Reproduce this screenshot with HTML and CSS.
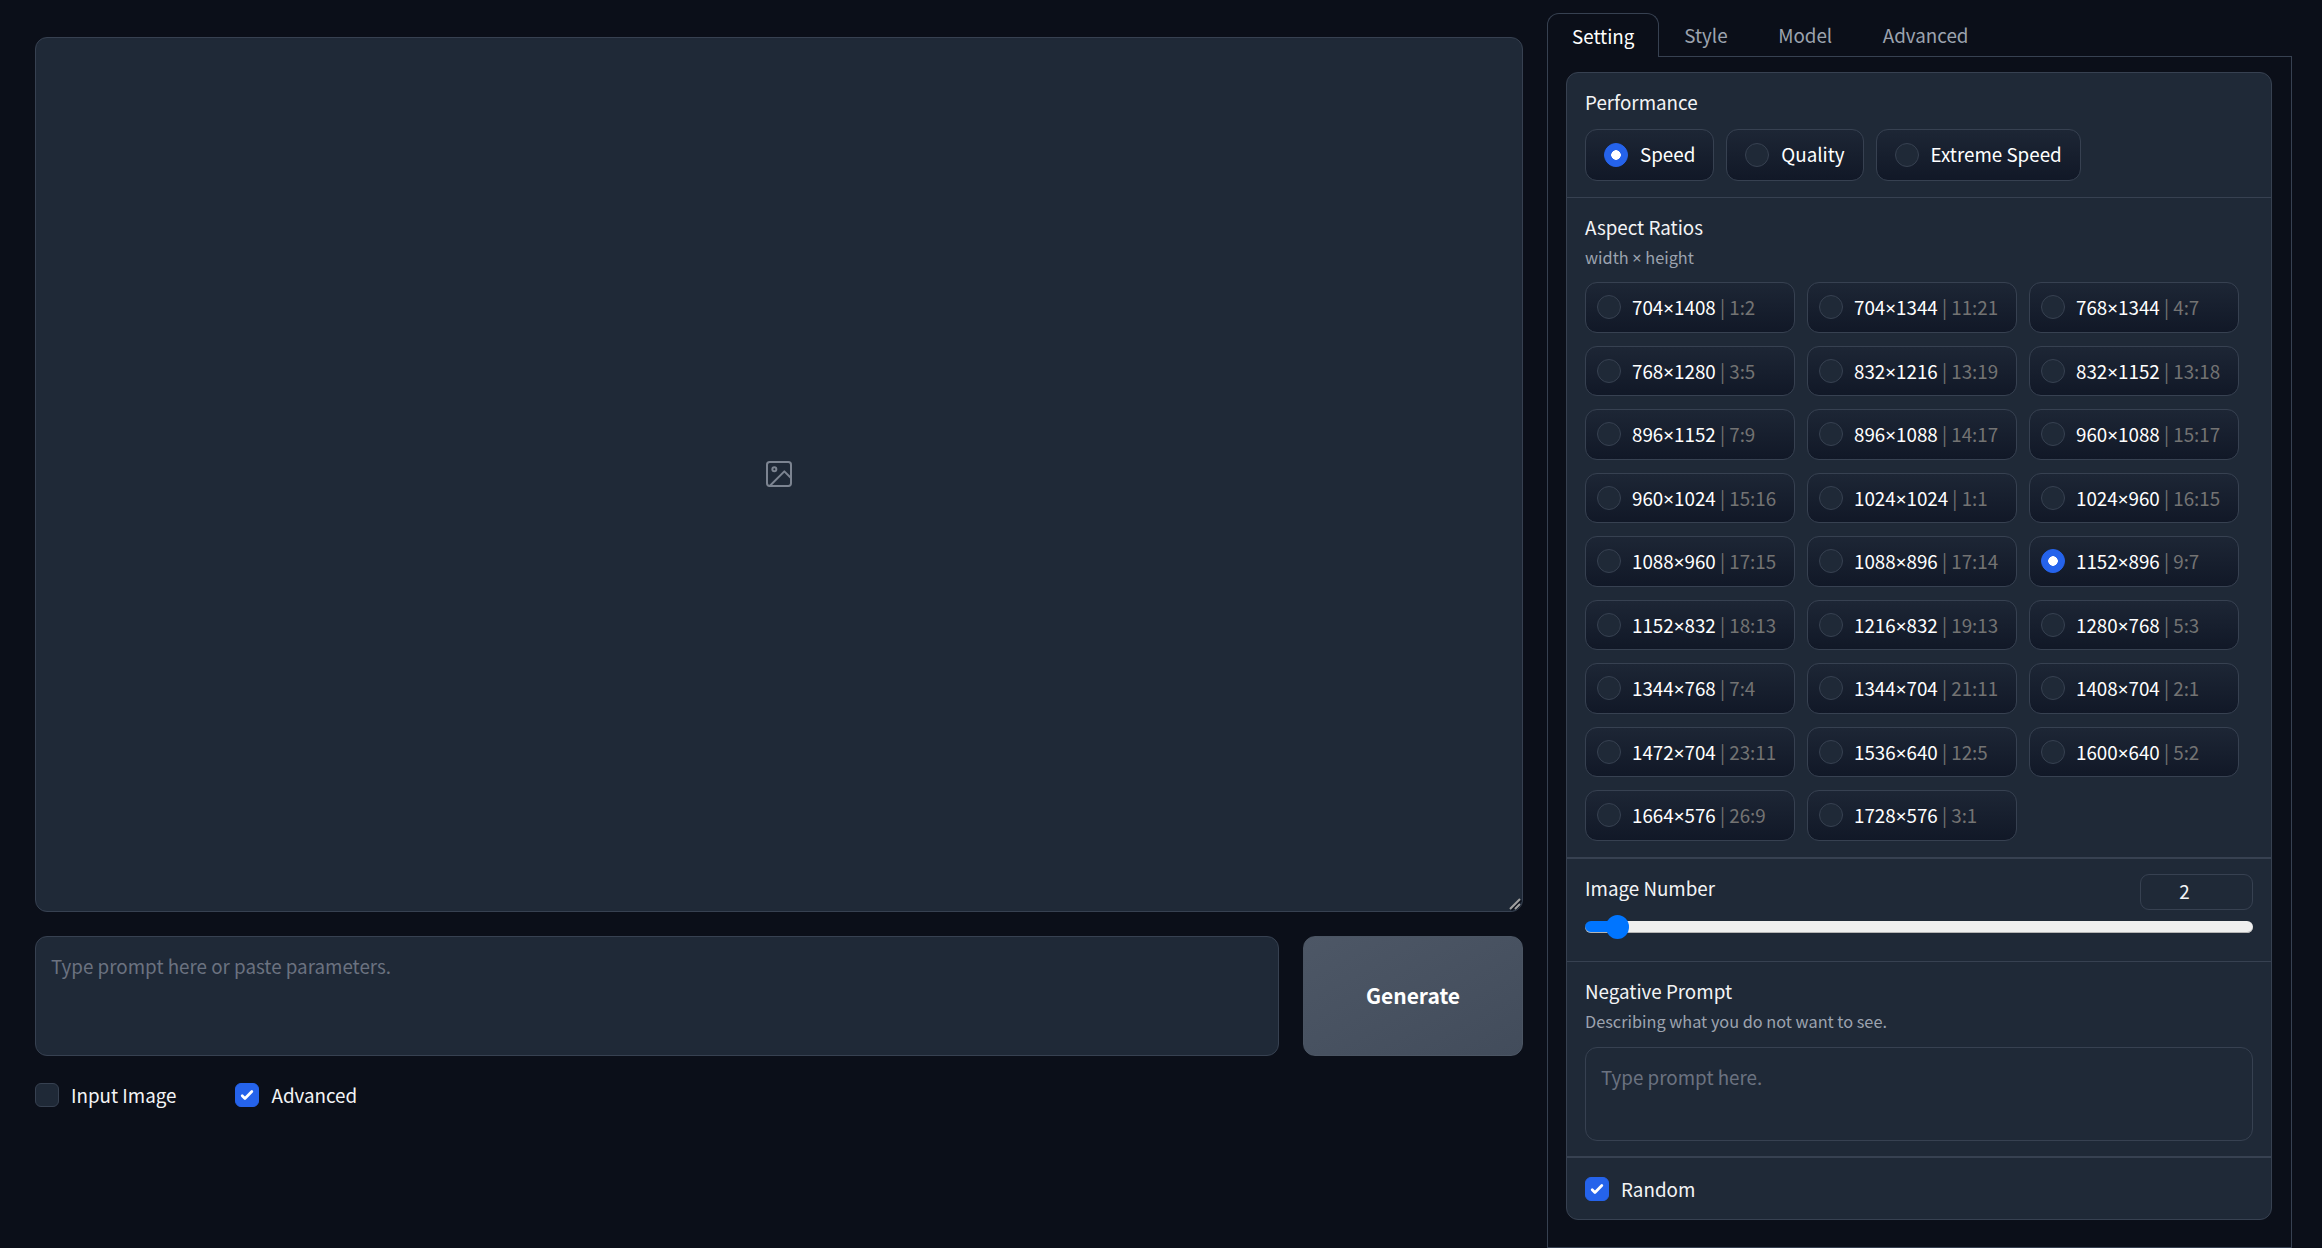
FILE: index.html
```html
<!DOCTYPE html>
<html lang="en">
<head>
    <meta charset="UTF-8">
    <title>Fooocus</title>
    <link rel="stylesheet" href="styles.css">
</head>
<body>
    <div class="app">
        <main class="left">
            <div class="image-box">
                <svg class="image-icon" viewBox="0 0 24 24" fill="none" stroke="currentColor" stroke-width="1.5" stroke-linecap="round" stroke-linejoin="round">
                    <rect x="3" y="3" width="18" height="18" rx="2" ry="2"></rect>
                    <circle cx="8.5" cy="8.5" r="1.5"></circle>
                    <polyline points="21 15 16 10 5 21"></polyline>
                </svg>
                <svg class="resize-handle" viewBox="0 0 14 14" fill="none">
                    <path d="M3.5 13.5 13.5 3.5M8.5 13.5 13.5 8.5" stroke="#0b0f19" stroke-width="1.5"></path>
                    <path d="M2 12 12 2M7 12 12 7" stroke="#a0a0a0" stroke-width="2"></path>
                </svg>
            </div>

            <div class="prompt-row">
                <textarea class="prompt" placeholder="Type prompt here or paste parameters."></textarea>
                <button class="generate">Generate</button>
            </div>

            <div class="options">
                <label class="check"><input type="checkbox"><span>Input Image</span></label>
                <label class="check"><input type="checkbox" checked><span>Advanced</span></label>
            </div>
        </main>

        <aside class="right">
            <nav class="tabs">
                <a class="tab active" href="#">Setting</a>
                <a class="tab" href="#">Style</a>
                <a class="tab" href="#">Model</a>
                <a class="tab" href="#">Advanced</a>
            </nav>

            <div class="tab-panel">
                <div class="block">
                    <section class="section performance">
                        <div class="title">Performance</div>
                        <div class="perf-options">
                            <label class="radio"><input type="radio" name="perf" checked><span>Speed</span></label>
                            <label class="radio"><input type="radio" name="perf"><span>Quality</span></label>
                            <label class="radio"><input type="radio" name="perf"><span>Extreme Speed</span></label>
                        </div>
                    </section>

                    <section class="section ratios">
                        <div class="title">Aspect Ratios</div>
                        <div class="info">width <i>×</i> height</div>
                        <div class="ratio-grid">
                            <label class="radio"><input type="radio" name="ratio"><span>704<i>×</i>1408 <em>| 1:2</em></span></label>
                            <label class="radio"><input type="radio" name="ratio"><span>704<i>×</i>1344 <em>| 11:21</em></span></label>
                            <label class="radio"><input type="radio" name="ratio"><span>768<i>×</i>1344 <em>| 4:7</em></span></label>
                            <label class="radio"><input type="radio" name="ratio"><span>768<i>×</i>1280 <em>| 3:5</em></span></label>
                            <label class="radio"><input type="radio" name="ratio"><span>832<i>×</i>1216 <em>| 13:19</em></span></label>
                            <label class="radio"><input type="radio" name="ratio"><span>832<i>×</i>1152 <em>| 13:18</em></span></label>
                            <label class="radio"><input type="radio" name="ratio"><span>896<i>×</i>1152 <em>| 7:9</em></span></label>
                            <label class="radio"><input type="radio" name="ratio"><span>896<i>×</i>1088 <em>| 14:17</em></span></label>
                            <label class="radio"><input type="radio" name="ratio"><span>960<i>×</i>1088 <em>| 15:17</em></span></label>
                            <label class="radio"><input type="radio" name="ratio"><span>960<i>×</i>1024 <em>| 15:16</em></span></label>
                            <label class="radio"><input type="radio" name="ratio"><span>1024<i>×</i>1024 <em>| 1:1</em></span></label>
                            <label class="radio"><input type="radio" name="ratio"><span>1024<i>×</i>960 <em>| 16:15</em></span></label>
                            <label class="radio"><input type="radio" name="ratio"><span>1088<i>×</i>960 <em>| 17:15</em></span></label>
                            <label class="radio"><input type="radio" name="ratio"><span>1088<i>×</i>896 <em>| 17:14</em></span></label>
                            <label class="radio"><input type="radio" name="ratio" checked><span>1152<i>×</i>896 <em>| 9:7</em></span></label>
                            <label class="radio"><input type="radio" name="ratio"><span>1152<i>×</i>832 <em>| 18:13</em></span></label>
                            <label class="radio"><input type="radio" name="ratio"><span>1216<i>×</i>832 <em>| 19:13</em></span></label>
                            <label class="radio"><input type="radio" name="ratio"><span>1280<i>×</i>768 <em>| 5:3</em></span></label>
                            <label class="radio"><input type="radio" name="ratio"><span>1344<i>×</i>768 <em>| 7:4</em></span></label>
                            <label class="radio"><input type="radio" name="ratio"><span>1344<i>×</i>704 <em>| 21:11</em></span></label>
                            <label class="radio"><input type="radio" name="ratio"><span>1408<i>×</i>704 <em>| 2:1</em></span></label>
                            <label class="radio"><input type="radio" name="ratio"><span>1472<i>×</i>704 <em>| 23:11</em></span></label>
                            <label class="radio"><input type="radio" name="ratio"><span>1536<i>×</i>640 <em>| 12:5</em></span></label>
                            <label class="radio"><input type="radio" name="ratio"><span>1600<i>×</i>640 <em>| 5:2</em></span></label>
                            <label class="radio"><input type="radio" name="ratio"><span>1664<i>×</i>576 <em>| 26:9</em></span></label>
                            <label class="radio"><input type="radio" name="ratio"><span>1728<i>×</i>576 <em>| 3:1</em></span></label>
                        </div>
                    </section>

                    <section class="section number">
                        <div class="number-head">
                            <div class="title">Image Number</div>
                            <input class="number-input" type="text" value="2">
                        </div>
                        <input class="slider" type="range" min="1" max="32" value="2">
                    </section>

                    <section class="section negative">
                        <div class="title">Negative Prompt</div>
                        <div class="info">Describing what you do not want to see.</div>
                        <textarea class="negative-input" placeholder="Type prompt here."></textarea>
                    </section>

                    <section class="section random">
                        <label class="check"><input type="checkbox" checked><span>Random</span></label>
                    </section>
                </div>
            </div>
        </aside>
    </div>
</body>
</html>
```

FILE: styles.css
```css
* {
    box-sizing: border-box;
}

html, body {
    height: 100%;
}

body {
    margin: 0;
    background-color: #0b0f19;
    color: #f3f4f6;
    font-family: "Noto Sans CJK KR", "Noto Sans", sans-serif;
    font-size: 18.8px;
    line-height: 28px;
    overflow: hidden;
}

/* the CJK font has a full-width times sign */
i {
    font-family: "Noto Sans", sans-serif;
    font-style: normal;
    line-height: 0;
}

.app {
    display: flex;
    height: 100%;
    padding-left: 35px;
}

/* left column */
.left {
    flex: none;
    width: 1488px;
    padding-top: 37px;
    margin-right: 24px;
}

.image-box {
    position: relative;
    display: flex;
    align-items: center;
    justify-content: center;
    height: 875px;
    padding: 0 1px 1px 0;
    background-color: #1f2937;
    border: 1px solid #374151;
    border-radius: 12px;
    overflow: hidden;
}

.image-icon {
    width: 32px;
    height: 32px;
    color: #9ca3af;
    opacity: 0.75;
}

.resize-handle {
    position: absolute;
    right: 0;
    bottom: 0;
    width: 14px;
    height: 14px;
}

.prompt-row {
    display: flex;
    gap: 24px;
    margin-top: 24px;
    height: 120px;
}

.prompt {
    flex: 1;
    padding: 15px;
    background-color: #1f2937;
    border: 1px solid #374151;
    border-radius: 12px;
    color: #f3f4f6;
    font: inherit;
    resize: none;
    outline: none;
}

.prompt::placeholder,
.negative-input::placeholder {
    color: #6b7280;
}

.generate {
    width: 220px;
    padding-bottom: 3px;
    background: linear-gradient(to bottom right, #4d5766, #424c5b);
    border: 1px solid #4b5563;
    border-radius: 12px;
    color: white;
    font-family: inherit;
    font-size: 21px;
    font-weight: 700;
    cursor: pointer;
}

.options {
    display: flex;
    gap: 59px;
    margin-top: 25px;
}

.check {
    display: flex;
    align-items: center;
    gap: 12px;
}

.check input {
    appearance: none;
    flex: none;
    width: 24px;
    height: 24px;
    margin: 0;
    background-color: #1f2937;
    border: 1px solid #374151;
    border-radius: 6px;
}

.check input:checked {
    background-color: #2563eb;
    border-color: #2563eb;
    background-image: url("data:image/svg+xml,%3Csvg viewBox='0 0 16 16' fill='white' xmlns='http://www.w3.org/2000/svg'%3E%3Cpath d='M12.207 4.793a1 1 0 010 1.414l-5 5a1 1 0 01-1.414 0l-2-2a1 1 0 011.414-1.414L6.5 9.086l4.293-4.293a1 1 0 011.414 0z'/%3E%3C/svg%3E");
    background-size: 100% 100%;
}

/* right column */
.right {
    flex: none;
    display: flex;
    flex-direction: column;
    width: 745px;
    padding-top: 13px;
}

.tabs {
    display: flex;
    height: 44px;
    border-bottom: 1px solid #374151;
}

.tab {
    padding: 0 25.3px;
    height: 44px;
    line-height: 43px;
    color: #9ca3af;
    text-decoration: none;
}

.tab.active {
    width: 112px;
    background-color: #0b0f19;
    border: 1px solid #374151;
    border-bottom: none;
    border-radius: 12px 12px 0 0;
    color: white;
    padding: 0 0 0 24px;
}

.tab-panel {
    flex: 1;
    padding: 15px 19px 0 18px;
    border: 1px solid #374151;
    border-top: none;
}

.block {
    background-color: #1f2937;
    border: 1px solid #374151;
    border-radius: 12px;
}

.section {
    padding: 16px 18px;
    border-bottom: 1px solid #374151;
}

.section:last-child {
    border-bottom: none;
}

.title {
    padding-bottom: 2px;
    line-height: 26px;
    color: #f3f4f6;
}

.info {
    margin-top: 4px;
    padding-bottom: 2px;
    color: #9ca3af;
    font-size: 16.3px;
    line-height: 22px;
}

.radio {
    display: flex;
    align-items: center;
    gap: 12px;
    background: linear-gradient(to top, #111827, #1d2635);
    border: 1px solid #374151;
    border-radius: 12px;
    color: white;
}

.radio input {
    appearance: none;
    flex: none;
    width: 24px;
    height: 24px;
    margin: 0;
    background-color: #1f2937;
    border: 1px solid #374151;
    border-radius: 50%;
}

.radio input:checked {
    background-color: #2563eb;
    border-color: #2563eb;
    background-image: radial-gradient(circle, white 0, white 4.5px, transparent 5px);
}

.perf-options {
    display: flex;
    gap: 12px;
    margin-top: 12px;
}

.perf-options .radio {
    height: 52px;
    padding: 0 18px;
}

.perf-options span {
    padding-bottom: 2px;
}

.ratios {
    border-bottom-width: 2px;
}

.ratio-grid {
    display: grid;
    grid-template-columns: repeat(3, 209.5px);
    grid-auto-rows: 50.5px;
    column-gap: 12.5px;
    row-gap: 13px;
    margin-top: 12px;
}

.ratio-grid .radio {
    gap: 11px;
    padding-left: 11px;
    white-space: nowrap;
}

.ratio-grid em {
    color: #737373;
    font-style: normal;
}

.number {
    height: 103px;
    padding-top: 15px;
    padding-bottom: 0;
}

.number-head {
    display: flex;
    justify-content: space-between;
}

.number-head .title {
    line-height: 28px;
}

.number-input {
    width: 113px;
    height: 36px;
    padding: 0 24px 3px 0;
    background-color: #1f2937;
    border: 1px solid #374151;
    border-radius: 9px;
    color: #f3f4f6;
    font: inherit;
    text-align: center;
    outline: none;
}

.slider {
    appearance: none;
    display: block;
    width: 668px;
    height: 24px;
    margin: 5px 0 0;
    background: transparent;
}

.slider::-webkit-slider-runnable-track {
    height: 12px;
    background: linear-gradient(to right, #0075ff 32px, #efefef 32px);
    border-radius: 6px;
    box-shadow: inset 0 -1px 0 #b5b5b5;
}

.slider::-webkit-slider-thumb {
    appearance: none;
    width: 23px;
    height: 24px;
    margin-top: -6px;
    background-color: #0075ff;
    border-radius: 50%;
}

.negative {
    padding-bottom: 15px;
    border-bottom-width: 2px;
}

.negative-input {
    display: block;
    width: 668px;
    height: 94px;
    margin-top: 13px;
    padding: 15px;
    background-color: #1f2937;
    border: 1px solid #374151;
    border-radius: 12px;
    color: #f3f4f6;
    font: inherit;
    resize: none;
    outline: none;
}

.random {
    height: 61px;
    padding-top: 17px;
    padding-bottom: 0;
}
```
